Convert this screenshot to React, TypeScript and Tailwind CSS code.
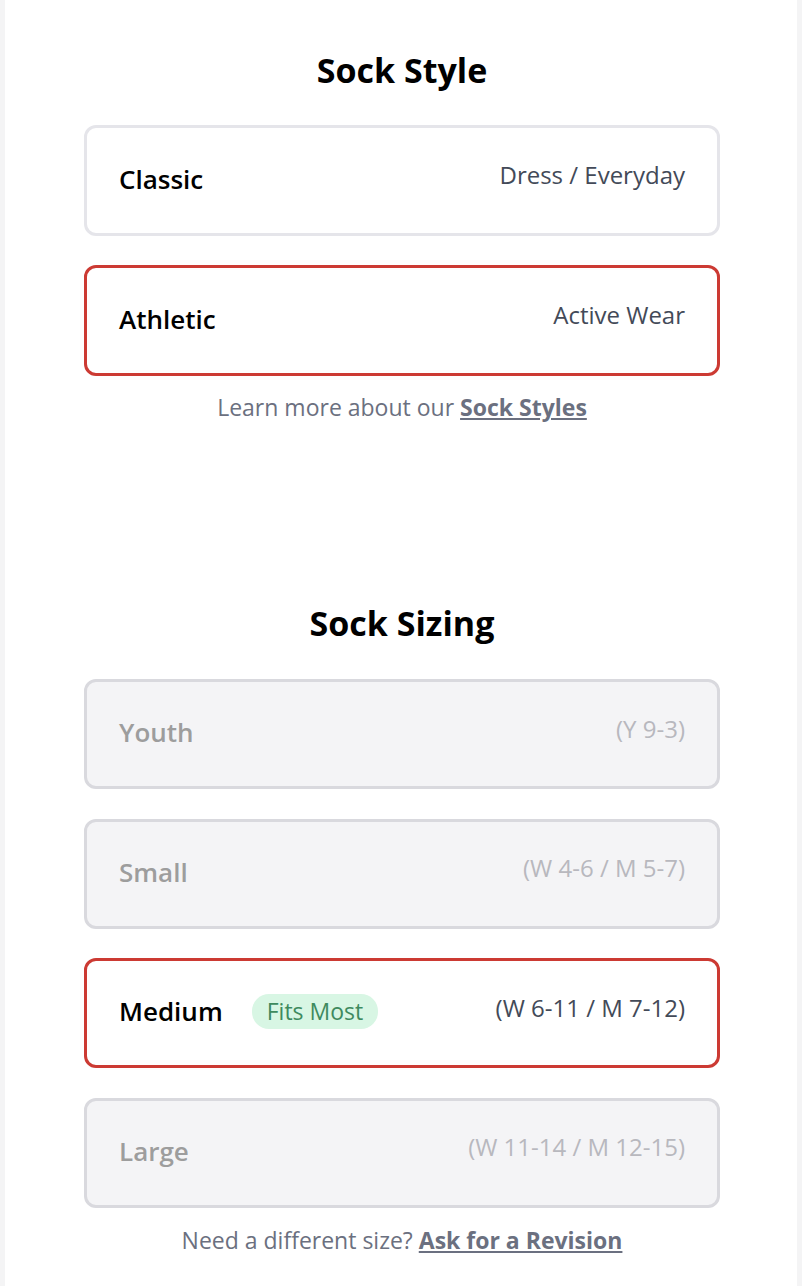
type Option = {
  label: string;
  detail: string;
  selected?: boolean;
  disabled?: boolean;
  badge?: string;
};

const styles: Option[] = [
  { label: "Classic", detail: "Dress / Everyday" },
  { label: "Athletic", detail: "Active Wear", selected: true },
];

const sizes: Option[] = [
  { label: "Youth", detail: "(Y 9-3)", disabled: true },
  { label: "Small", detail: "(W 4-6 / M 5-7)", disabled: true },
  { label: "Medium", detail: "(W 6-11 / M 7-12)", selected: true, badge: "Fits Most" },
  { label: "Large", detail: "(W 11-14 / M 12-15)", disabled: true },
];

function OptionCard({ option, height }: { option: Option; height: string }) {
  const border = option.selected
    ? "border-[#cc3a33] bg-white"
    : option.disabled
      ? "border-[#d9d9de] bg-[#f4f4f6]"
      : "border-[#e5e5ea] bg-white";
  return (
    <div
      className={`flex items-center justify-between rounded-[12px] border-[3px] px-[32px] pb-[4px] ${height} ${border}`}
    >
      <div className="flex items-center gap-[29px]">
        <span
          className={`text-[26px] font-semibold leading-[36px] ${option.disabled ? "text-[#9d9d9d]" : "text-black"}`}
        >
          {option.label}
        </span>
        {option.badge && (
          <span className="rounded-[17px] bg-[#d8f6e4] px-[15px] text-[23px] leading-[35px] text-[#3e8a5e]">
            {option.badge}
          </span>
        )}
      </div>
      <span
        className={`pb-[7px] text-[24px] leading-[34px] ${option.disabled ? "text-[#b8b8be]" : "text-[#434a58]"}`}
      >
        {option.detail}
      </span>
    </div>
  );
}

export default function App() {
  return (
    <div className="min-h-screen bg-[#f4f4f5] px-[5px] font-['Open_Sans',sans-serif]">
      <div className="min-h-[1286px] bg-white pb-[40px] pl-[79px] pr-[77px] pt-[46px]">
        <h2 className="text-center text-[34px] font-bold leading-[48px] text-black">Sock Style</h2>
        <div className="mt-[31px] flex flex-col gap-[29px]">
          {styles.map((s) => (
            <OptionCard key={s.label} option={s} height="h-[111px]" />
          ))}
        </div>
        <p className="mt-[16px] text-center text-[23px] leading-[30px] text-[#6b7080]">
          Learn more about our{" "}
          <a href="#" className="font-bold underline">
            Sock Styles
          </a>
        </p>

        <h2 className="mt-[177px] text-center text-[34px] font-bold leading-[48px] text-black">
          Sock Sizing
        </h2>
        <div className="mt-[32px] flex flex-col gap-[29.5px]">
          {sizes.map((s) => (
            <OptionCard key={s.label} option={s} height="h-[110px]" />
          ))}
        </div>
        <p className="mt-[17px] text-center text-[23px] leading-[30px] text-[#6b7080]">
          Need a different size?{" "}
          <a href="#" className="font-bold underline">
            Ask for a Revision
          </a>
        </p>
      </div>
    </div>
  );
}
